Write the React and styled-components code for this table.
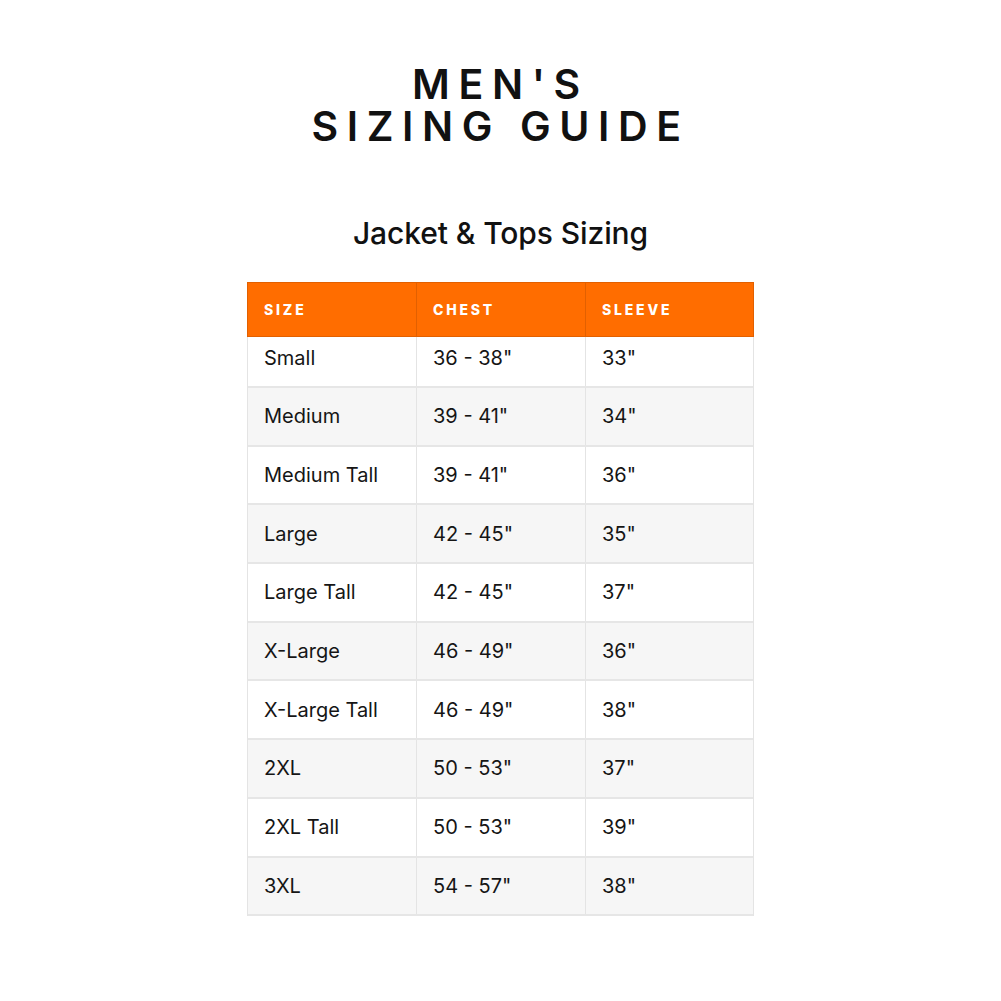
import styled, { createGlobalStyle } from "styled-components";

const GlobalStyle = createGlobalStyle`
  body {
    margin: 0;
    background: #ffffff;
    font-family: "Inter", "Liberation Sans", sans-serif;
    color: #111111;
  }
`;

const rows = [
  ["Small", '36 - 38"', '33"'],
  ["Medium", '39 - 41"', '34"'],
  ["Medium Tall", '39 - 41"', '36"'],
  ["Large", '42 - 45"', '35"'],
  ["Large Tall", '42 - 45"', '37"'],
  ["X-Large", '46 - 49"', '36"'],
  ["X-Large Tall", '46 - 49"', '38"'],
  ["2XL", '50 - 53"', '37"'],
  ["2XL Tall", '50 - 53"', '39"'],
  ["3XL", '54 - 57"', '38"'],
];

const Page = styled.div`
  width: 1001px;
  height: 1001px;
  display: flex;
  flex-direction: column;
  align-items: center;
  padding-top: 63px;
  box-sizing: border-box;
`;

const Title = styled.h1`
  margin: 0;
  font-family: "Inter", "Liberation Sans", sans-serif;
  font-weight: 600;
  font-size: 41px;
  line-height: 42px;
  letter-spacing: 8.6px;
  text-align: center;
  color: #111;
  padding-left: 0;
`;

const Subtitle = styled.h2`
  margin: 66px 0 0;
  font-weight: 500;
  font-size: 30px;
  line-height: 40px;
  letter-spacing: -0.1px;
  color: #111;
`;

const Table = styled.div`
  margin-top: 29px;
  width: 505px;
  display: flex;
  flex-direction: column;
  border-left: 1px solid #e4e4e4;
  border-right: 1px solid #e4e4e4;
`;

const HeadRow = styled.div`
  display: grid;
  grid-template-columns: 168px 169px 168px;
  height: 55px;
  box-sizing: border-box;
  background: #ff6d00;
  border: 1px solid #e26000;
  margin: 0 -1px;
`;

const HeadCell = styled.div`
  display: flex;
  align-items: center;
  padding-left: 16px;
  color: #ffffff;
  font-weight: 800;
  font-size: 14px;
  letter-spacing: 2.8px;
  & + & {
    border-left: 1px solid #e26000;
  }
`;

const Row = styled.div`
  display: grid;
  grid-template-columns: 168px 169px 168px;
  height: ${(p) => (p.$first ? "49px" : "56.7px")};
  background: ${(p) => (p.$shaded ? "#f6f6f6" : "#ffffff")};
  border-bottom: 2px solid #e6e6e6;
`;

const Cell = styled.div`
  display: flex;
  align-items: center;
  padding-left: 16px;
  padding-bottom: ${(p) => (p.$first ? "7px" : "0")};
  font-size: 20px;
  color: #151515;
  & + & {
    border-left: 1px solid #e4e4e4;
  }
`;

export default function App() {
  return (
    <>
      <GlobalStyle />
      <Page>
        <Title>
          MEN'S
          <br />
          SIZING GUIDE
        </Title>
        <Subtitle>Jacket &amp; Tops Sizing</Subtitle>
        <Table>
          <HeadRow>
            <HeadCell>SIZE</HeadCell>
            <HeadCell>CHEST</HeadCell>
            <HeadCell>SLEEVE</HeadCell>
          </HeadRow>
          {rows.map((r, i) => (
            <Row key={r[0]} $shaded={i % 2 === 1} $first={i === 0}>
              {r.map((c, j) => (
                <Cell key={j} $first={i === 0}>
                  {c}
                </Cell>
              ))}
            </Row>
          ))}
        </Table>
      </Page>
    </>
  );
}
